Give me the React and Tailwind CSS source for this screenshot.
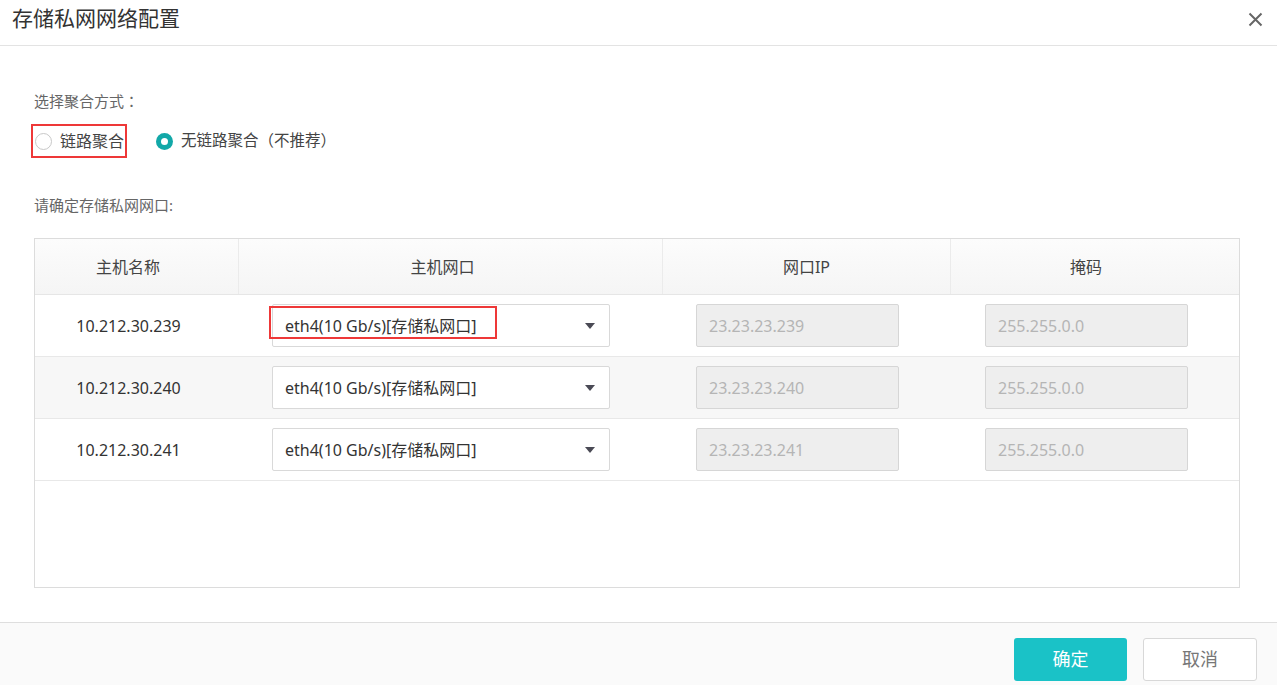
import React, { useState } from 'react';

const FONT = { fontFamily: '"Noto Sans", "Noto Sans CJK SC", sans-serif' };
const COLON = { fontFamily: '"Noto Sans CJK JP", sans-serif' };

const rows = [
    { host: '10.212.30.239', port: 'eth4(10 Gb/s)[存储私网口]', ip: '23.23.23.239', mask: '255.255.0.0' },
    { host: '10.212.30.240', port: 'eth4(10 Gb/s)[存储私网口]', ip: '23.23.23.240', mask: '255.255.0.0' },
    { host: '10.212.30.241', port: 'eth4(10 Gb/s)[存储私网口]', ip: '23.23.23.241', mask: '255.255.0.0' },
];

const cols = 'grid grid-cols-[204px_424px_288px_1fr]';

const Radio = ({ checked }) =>
    checked ? (
        <span className="w-[17px] h-[17px] rounded-full bg-[#12a8a8] flex items-center justify-center">
            <span className="w-[7px] h-[7px] rounded-full bg-white" />
        </span>
    ) : (
        <span className="w-[17px] h-[17px] rounded-full border border-[#c8c8c8] bg-white" />
    );

export default function App() {
    const [mode, setMode] = useState('none');

    return (
        <div className="w-full h-[685px] bg-white flex flex-col text-[#333]" style={FONT}>
            {/* Titolo */}
            <div className="h-[46px] flex-shrink-0 flex items-center justify-between pl-[12px] pr-[14px] border-b border-[#e3e3e3]">
                <h1 className="text-[21px] text-[#333] leading-none -mt-[8px]">存储私网网络配置</h1>
                <svg width="15" height="15" viewBox="0 0 15 15" className="-mt-[7px]">
                    <path d="M1.5 1.5 L13.5 13.5 M13.5 1.5 L1.5 13.5" stroke="#666" strokeWidth="2" />
                </svg>
            </div>

            {/* Corpo */}
            <div className="flex-grow pl-[34px] pr-[37px] pt-[45px]">
                <p className="text-[15px] leading-[20px] text-[#666]">
                    选择聚合方式<span style={COLON}>：</span>
                </p>

                <div className="mt-[13px] flex items-center h-[34px]">
                    <label
                        className="-ml-[3px] h-[34px] flex items-center gap-[8px] pl-[2px] pr-[1px] border-2 border-[#ee3838] cursor-pointer"
                        onClick={() => setMode('link')}
                    >
                        <Radio checked={mode === 'link'} />
                        <span className="text-[16px] text-[#444]">链路聚合</span>
                    </label>
                    <label
                        className="ml-[29px] flex items-center gap-[8px] cursor-pointer"
                        onClick={() => setMode('none')}
                    >
                        <Radio checked={mode === 'none'} />
                        <span className="text-[15.5px] text-[#444]">无链路聚合（不推荐）</span>
                    </label>
                </div>

                <p className="mt-[37px] text-[15px] leading-[20px] text-[#666]">请确定存储私网网口:</p>

                {/* Tabella */}
                <div className="mt-[23px] h-[350px] border border-[#dcdcdc]">
                    <div className={`${cols} h-[56px] bg-gradient-to-b from-[#fcfcfc] to-[#f5f5f5] border-b border-[#e6e6e6] text-[16px] text-[#444]`}>
                        <div className="flex items-center justify-center pr-[17px] border-r border-[#ebebeb]">主机名称</div>
                        <div className="flex items-center justify-center pr-[16px] border-r border-[#ebebeb]">主机网口</div>
                        <div className="flex items-center justify-center border-r border-[#ebebeb]">网口IP</div>
                        <div className="flex items-center justify-center pr-[18px]">掩码</div>
                    </div>

                    {rows.map((r, i) => (
                        <div
                            key={r.host}
                            className={`${cols} h-[62px] border-b border-[#e8e8e8] ${i === 1 ? 'bg-[#f7f7f7]' : 'bg-white'}`}
                        >
                            <div className="flex items-center justify-center pr-[17px] text-[16px] text-[#333]">{r.host}</div>
                            <div className="flex items-center pl-[33px]">
                                <div className="relative w-[338px] h-[43px] bg-white border border-[#d9d9d9] rounded-[2px] flex items-center justify-between pl-[12px] pr-[14px]">
                                    <span className="text-[16px] text-[#333]">{r.port}</span>
                                    <svg width="10" height="6" viewBox="0 0 10 6">
                                        <path d="M0 0 L10 0 L5 6 Z" fill="#4a4a55" />
                                    </svg>
                                    {i === 0 && (
                                        <span className="absolute -left-[4px] top-[1px] w-[228px] h-[33px] border-2 border-[#ee3838] pointer-events-none" />
                                    )}
                                </div>
                            </div>
                            <div className="flex items-center pl-[33px]">
                                <div className="w-[203px] h-[43px] bg-[#eeeeee] border border-[#d6d6d6] rounded-[2px] flex items-center pl-[12px] text-[16px] text-[#b5b5b5]">
                                    {r.ip}
                                </div>
                            </div>
                            <div className="flex items-center pl-[34px]">
                                <div className="w-[203px] h-[43px] bg-[#eeeeee] border border-[#d6d6d6] rounded-[2px] flex items-center pl-[12px] text-[16px] text-[#b5b5b5]">
                                    {r.mask}
                                </div>
                            </div>
                        </div>
                    ))}
                </div>
            </div>

            {/* Piè di pagina */}
            <div className="h-[63px] flex-shrink-0 bg-[#fafafa] border-t border-[#dedede] flex items-start justify-end gap-[16px] pr-[20px] pt-[15px]">
                <button className="w-[113px] h-[43px] rounded-[3px] bg-[#1ac2c7] text-white text-[18px]">确定</button>
                <button className="w-[114px] h-[43px] rounded-[3px] bg-white border border-[#d8d8d8] text-[#777] text-[18px]">取消</button>
            </div>
        </div>
    );
}
